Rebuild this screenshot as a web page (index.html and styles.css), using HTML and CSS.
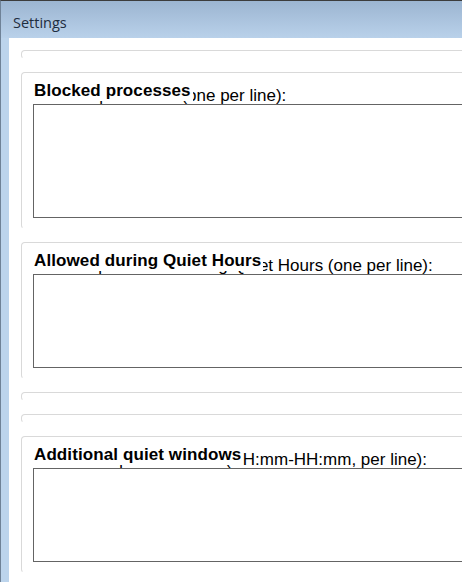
FILE: index.html
```html
<!DOCTYPE html>
<html>
<head>
<meta charset="utf-8">
<title>Settings</title>
<link rel="stylesheet" href="styles.css">
</head>
<body>
<div class="window">
  <div class="titlebar"><span class="title">Settings</span></div>
  <div class="client">
    <div class="group empty"></div>
    <div class="group">
      <div class="header">Blocked processes</div>
      <div class="label">Blocked processes (one per line):</div>
      <textarea class="field tall" readonly></textarea>
    </div>
    <div class="group">
      <div class="header">Allowed during Quiet Hours</div>
      <div class="label">Allowed processes during Quiet Hours (one per line):</div>
      <textarea class="field" readonly></textarea>
    </div>
    <div class="group empty"></div>
    <div class="group empty"></div>
    <div class="group">
      <div class="header">Additional quiet windows</div>
      <div class="label">Additional quiet windows (HH:mm-HH:mm, per line):</div>
      <textarea class="field" readonly></textarea>
    </div>
  </div>
</div>
</body>
</html>
```
FILE: styles.css
```css
html, body {
  margin: 0;
  padding: 0;
  height: 100%;
  overflow: hidden;
  background: #ffffff;
}

.window {
  height: 582px;
  box-sizing: border-box;
  border-top: 1px solid #3c3c3c;
  border-left: 1px solid #6f8297;
  background: #bcd4ec;
  display: flex;
  flex-direction: column;
}

.titlebar {
  height: 37px;
  flex: none;
  box-sizing: border-box;
  padding: 12px 0 0 12px;
  background: linear-gradient(#9cb5d1, #b9d1ea);
}

.title {
  font-family: "Open Sans", "Liberation Sans", sans-serif;
  font-size: 14.5px;
  line-height: 20px;
  color: #1e2d3e;
}

.client {
  flex: 1;
  margin-left: 8px;
  background: #ffffff;
  padding: 12px 0 0 12px;
  overflow: hidden;
}

.group {
  position: relative;
  width: 560px;
  box-sizing: border-box;
  border: 1px solid #d9d9d9;
  border-bottom-color: #ffffff;
  border-radius: 4px;
  margin-bottom: 13px;
  padding: 14px 0 10px 11px;
}

.group.empty {
  height: 9px;
  padding: 0;
}

.header {
  position: absolute;
  top: 8px;
  left: 10px;
  padding: 0 2px 0 2px;
  background: #ffffff;
  font-family: "Liberation Sans", Arial, sans-serif;
  font-weight: bold;
  font-size: 17px;
  letter-spacing: 0.1px;
  line-height: 20px;
  color: #000000;
  white-space: nowrap;
  z-index: 1;
}

.label {
  font-family: "Liberation Sans", Arial, sans-serif;
  font-size: 17px;
  line-height: 17px;
  color: #000000;
  padding-left: 1px;
  white-space: nowrap;
}

.field {
  display: block;
  width: 100%;
  height: 94px;
  box-sizing: border-box;
  margin: 0;
  border: 1px solid #646464;
  background: #ffffff;
  resize: none;
  outline: none;
}

.field.tall {
  height: 114px;
}
```
